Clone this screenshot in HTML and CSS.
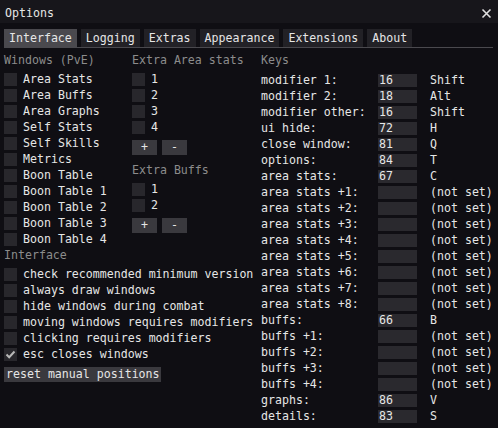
FILE: index.html
```html
<!DOCTYPE html>
<html>
<head>
<meta charset="utf-8">
<link rel="stylesheet" href="styles.css">
</head>
<body>
<div class="window">
  <div class="titlebar">
    <span class="title">Options</span>
    <svg class="close" width="11" height="11" viewBox="0 0 11 11"><path d="M1.5 1.5 L9.5 9.5 M9.5 1.5 L1.5 9.5" stroke="#e0e0e0" stroke-width="1.6" fill="none"/></svg>
  </div>
  <div class="tabbar">
    <span class="tab active">Interface</span>
    <span class="tab">Logging</span>
    <span class="tab">Extras</span>
    <span class="tab">Appearance</span>
    <span class="tab">Extensions</span>
    <span class="tab">About</span>
  </div>
  <div class="content">
    <div class="leftwrap">
      <div class="toprow">
        <div class="col windows">
          <div class="header">Windows (PvE)</div>
          <div class="rows">
            <div class="check"><span class="box"></span>Area Stats</div>
            <div class="check"><span class="box"></span>Area Buffs</div>
            <div class="check"><span class="box"></span>Area Graphs</div>
            <div class="check"><span class="box"></span>Self Stats</div>
            <div class="check"><span class="box"></span>Self Skills</div>
            <div class="check"><span class="box"></span>Metrics</div>
            <div class="check"><span class="box"></span>Boon Table</div>
            <div class="check"><span class="box"></span>Boon Table 1</div>
            <div class="check"><span class="box"></span>Boon Table 2</div>
            <div class="check"><span class="box"></span>Boon Table 3</div>
            <div class="check"><span class="box"></span>Boon Table 4</div>
          </div>
        </div>
        <div class="col extra">
          <div class="header">Extra Area stats</div>
          <div class="rows">
            <div class="check"><span class="box"></span>1</div>
            <div class="check"><span class="box"></span>2</div>
            <div class="check"><span class="box"></span>3</div>
            <div class="check"><span class="box"></span>4</div>
          </div>
          <div class="btnrow"><span class="btn small">+</span><span class="btn small">-</span></div>
          <div class="header header-gap">Extra Buffs</div>
          <div class="rows">
            <div class="check"><span class="box"></span>1</div>
            <div class="check"><span class="box"></span>2</div>
          </div>
          <div class="btnrow"><span class="btn small">+</span><span class="btn small">-</span></div>
        </div>
      </div>
      <div class="interface">
        <div class="header">Interface</div>
        <div class="rows">
          <div class="check"><span class="box"></span>check recommended minimum version</div>
          <div class="check"><span class="box"></span>always draw windows</div>
          <div class="check"><span class="box"></span>hide windows during combat</div>
          <div class="check"><span class="box"></span>moving windows requires modifiers</div>
          <div class="check"><span class="box"></span>clicking requires modifiers</div>
          <div class="check"><span class="box checked"><svg width="13" height="13" viewBox="0 0 13 13"><path d="M2.5 6.5 L5.2 9.2 L10.5 3.5" stroke="#b8b8b8" stroke-width="2" fill="none"/></svg></span>esc closes windows</div>
        </div>
        <div class="btn reset">reset manual positions</div>
      </div>
    </div>
    <div class="col keys">
      <div class="header">Keys</div>
      <div class="rows keyrows">
        <div class="key"><span class="kname">modifier 1:</span><span class="kinput">16</span><span class="kval">Shift</span></div>
        <div class="key"><span class="kname">modifier 2:</span><span class="kinput">18</span><span class="kval">Alt</span></div>
        <div class="key"><span class="kname">modifier other:</span><span class="kinput">16</span><span class="kval">Shift</span></div>
        <div class="key"><span class="kname">ui hide:</span><span class="kinput">72</span><span class="kval">H</span></div>
        <div class="key"><span class="kname">close window:</span><span class="kinput">81</span><span class="kval">Q</span></div>
        <div class="key"><span class="kname">options:</span><span class="kinput">84</span><span class="kval">T</span></div>
        <div class="key"><span class="kname">area stats:</span><span class="kinput">67</span><span class="kval">C</span></div>
        <div class="key"><span class="kname">area stats +1:</span><span class="kinput"></span><span class="kval">(not set)</span></div>
        <div class="key"><span class="kname">area stats +2:</span><span class="kinput"></span><span class="kval">(not set)</span></div>
        <div class="key"><span class="kname">area stats +3:</span><span class="kinput"></span><span class="kval">(not set)</span></div>
        <div class="key"><span class="kname">area stats +4:</span><span class="kinput"></span><span class="kval">(not set)</span></div>
        <div class="key"><span class="kname">area stats +5:</span><span class="kinput"></span><span class="kval">(not set)</span></div>
        <div class="key"><span class="kname">area stats +6:</span><span class="kinput"></span><span class="kval">(not set)</span></div>
        <div class="key"><span class="kname">area stats +7:</span><span class="kinput"></span><span class="kval">(not set)</span></div>
        <div class="key"><span class="kname">area stats +8:</span><span class="kinput"></span><span class="kval">(not set)</span></div>
        <div class="key"><span class="kname">buffs:</span><span class="kinput">66</span><span class="kval">B</span></div>
        <div class="key"><span class="kname">buffs +1:</span><span class="kinput"></span><span class="kval">(not set)</span></div>
        <div class="key"><span class="kname">buffs +2:</span><span class="kinput"></span><span class="kval">(not set)</span></div>
        <div class="key"><span class="kname">buffs +3:</span><span class="kinput"></span><span class="kval">(not set)</span></div>
        <div class="key"><span class="kname">buffs +4:</span><span class="kinput"></span><span class="kval">(not set)</span></div>
        <div class="key"><span class="kname">graphs:</span><span class="kinput">86</span><span class="kval">V</span></div>
        <div class="key"><span class="kname">details:</span><span class="kinput">83</span><span class="kval">S</span></div>
      </div>
    </div>
  </div>
</div>
</body>
</html>
```
FILE: styles.css
```css
html, body {
  margin: 0;
  padding: 0;
  background: #0f0e13;
}
.window {
  width: 498px;
  height: 428px;
  overflow: hidden;
  background: #0f0e13;
  color: #e6e6e6;
  font-family: "DejaVu Sans Mono", "Liberation Mono", monospace;
  font-size: 11.6px;
  line-height: 13px;
  white-space: nowrap;
}
.titlebar {
  height: 23px;
  box-sizing: border-box;
  background: #17161b;
  display: flex;
  justify-content: space-between;
  align-items: flex-start;
  padding: 7px 6px 0 5px;
}
.close {
  margin-top: 1px;
}
.tabbar {
  display: flex;
  gap: 4px;
  margin: 6px 5px 0 4px;
  border-bottom: 1px solid #4a494e;
}
.tab {
  height: 18px;
  box-sizing: border-box;
  padding: 3px 5px 2px 5px;
  background: #222126;
}
.tab.active {
  background: #4a494e;
}
.content {
  display: flex;
  padding: 6px 0 0 4px;
}
.leftwrap {
  width: 257px;
  flex: none;
  display: flex;
  flex-direction: column;
}
.toprow {
  display: flex;
}
.col.windows {
  width: 128px;
}
.col.extra {
  width: 129px;
}
.header {
  color: #8c8c8c;
  height: 13px;
  margin-bottom: 6px;
}
.header-gap {
  margin-top: 9px;
}
.rows {
  display: flex;
  flex-direction: column;
  gap: 3px;
}
.check {
  display: flex;
  align-items: center;
  gap: 6px;
  height: 13px;
}
.box {
  width: 13px;
  height: 13px;
  background: #28272c;
  flex: none;
  display: flex;
}
.btnrow {
  display: flex;
  gap: 5px;
  margin-top: 6px;
}
.btn {
  background: #3a393e;
  height: 15px;
  box-sizing: border-box;
  padding-top: 1px;
}
.btn.small {
  width: 25px;
  text-align: center;
}
.interface {
  margin-top: 3px;
}
.reset {
  margin-top: 6px;
  width: 157px;
  padding-left: 2px;
}
.keys {
  flex: 1;
}
.keyrows {
  padding-top: 1px;
}
.key {
  display: flex;
  height: 13px;
}
.kname {
  width: 117px;
  flex: none;
}
.kinput {
  width: 39px;
  height: 13px;
  flex: none;
  background: #2a292e;
  padding-left: 1px;
  box-sizing: border-box;
  margin-right: 13px;
}
```
